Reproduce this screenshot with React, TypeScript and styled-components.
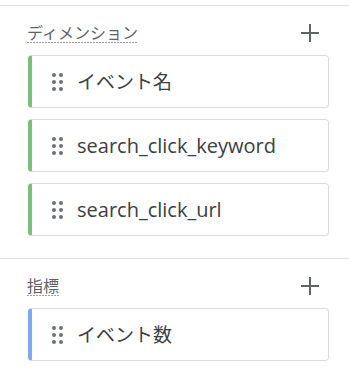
import React from 'react'
import styled, { createGlobalStyle } from 'styled-components'

const GlobalStyle = createGlobalStyle`
  body {
    margin: 0;
    background: #ffffff;
    font-family: "Open Sans", "Noto Sans CJK JP", sans-serif;
  }
`

const Panel = styled.div`
  width: 349px;
  padding-top: 5px;
`

const Section = styled.section`
  border-top: 1px solid #e0e0e0;
  padding: 0 20px 22px 28px;
`

const Header = styled.div`
  display: flex;
  align-items: center;
  justify-content: space-between;
  padding-top: 16px;
  margin-bottom: 12px;
`

const Label = styled.span`
  margin-left: -1px;
  font-family: "Noto Sans CJK JP", sans-serif;
  font-size: 16px;
  line-height: 20px;
  color: #5f6368;
  padding-bottom: 1px;
  background-image: repeating-linear-gradient(
    to right,
    #9aa0a6 0 2px,
    transparent 2px 3px
  );
  background-size: 100% 1px;
  background-position: bottom left;
  background-repeat: no-repeat;
`

const AddButton = styled.button`
  display: flex;
  align-items: center;
  justify-content: center;
  width: 20px;
  height: 20px;
  margin-right: 9px;
  padding: 0;
  border: none;
  background: none;
  cursor: pointer;
`

const List = styled.div`
  display: flex;
  flex-direction: column;
  gap: 11px;
`

const Chip = styled.div<{ $accent: string }>`
  display: flex;
  align-items: center;
  height: 51px;
  box-sizing: content-box;
  padding-left: 20px;
  border: 1px solid #dadce0;
  border-left: 4px solid ${props => props.$accent};
  border-radius: 4px;
  background: #ffffff;
`

const Handle = styled.span`
  display: grid;
  grid-template-columns: repeat(2, 4px);
  grid-auto-rows: 4px;
  gap: 3px;
  margin-right: 14px;

  & > i {
    width: 4px;
    height: 4px;
    border-radius: 50%;
    background: #6e7277;
  }
`

const Name = styled.span<{ $cjk: boolean }>`
  font-size: ${props => (props.$cjk ? '19px' : '20px')};
  line-height: 26px;
  color: #3c4043;
`

const SECTIONS = [
  {
    title: 'ディメンション',
    accent: '#74c476',
    items: ['イベント名', 'search_click_keyword', 'search_click_url'],
  },
  {
    title: '指標',
    accent: '#7baaf7',
    items: ['イベント数'],
  },
]

function PlusIcon() {
  return (
    <svg width="20" height="20" viewBox="0 0 20 20">
      <path d="M10 1v18M1 10h18" stroke="#5f6368" strokeWidth="2" fill="none" />
    </svg>
  )
}

function DragHandle() {
  return (
    <Handle>
      {[0, 1, 2, 3, 4, 5].map(i => (
        <i key={i} />
      ))}
    </Handle>
  )
}

export default function App() {
  return (
    <>
      <GlobalStyle />
      <Panel>
        {SECTIONS.map(section => (
          <Section key={section.title}>
            <Header>
              <Label>{section.title}</Label>
              <AddButton aria-label={'追加'}>
                <PlusIcon />
              </AddButton>
            </Header>
            <List>
              {section.items.map(item => (
                <Chip key={item} $accent={section.accent}>
                  <DragHandle />
                  <Name $cjk={/[^\x00-\x7f]/.test(item)}>{item}</Name>
                </Chip>
              ))}
            </List>
          </Section>
        ))}
      </Panel>
    </>
  )
}
